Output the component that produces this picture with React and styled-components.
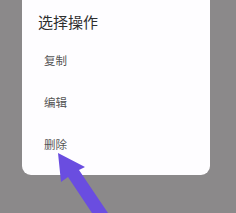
import React from "react";
import styled, { createGlobalStyle } from "styled-components";

const GlobalStyle = createGlobalStyle`
  html, body {
    margin: 0;
    padding: 0;
    background: #8b898a;
    overflow: hidden;
  }
`;

const Screen = styled.div`
  position: relative;
  width: 236px;
  height: 213px;
  background: #8b898a;
  font-family: "Noto Sans CJK SC", "Noto Sans", sans-serif;
`;

const Sheet = styled.div`
  margin-left: 22px;
  width: 188px;
  height: 175px;
  box-sizing: border-box;
  padding: 10px 0 10px 0;
  background: #fefdff;
  border-radius: 0 0 9px 9px;
`;

const Title = styled.div`
  height: 24px;
  line-height: 24px;
  padding-left: 16px;
  margin-bottom: 5px;
  font-size: 15px;
  color: #2e2e2e;
`;

const Item = styled.div`
  height: 42px;
  line-height: 42px;
  padding-left: 22px;
  font-size: 11.5px;
  color: #555;
`;

const Arrow = styled.svg`
  position: absolute;
  left: 0;
  top: 0;
  pointer-events: none;
`;

export default function App() {
  return (
    <Screen>
      <GlobalStyle />
      <Sheet>
        <Title>选择操作</Title>
        <Item>复制</Item>
        <Item>编辑</Item>
        <Item>删除</Item>
      </Sheet>
      <Arrow width="236" height="213" viewBox="0 0 236 213">
        <polygon
          points="58,153 85,167 79,170 108,213 92,213 68,177 61,182"
          fill="#6a4de0"
        />
      </Arrow>
    </Screen>
  );
}
